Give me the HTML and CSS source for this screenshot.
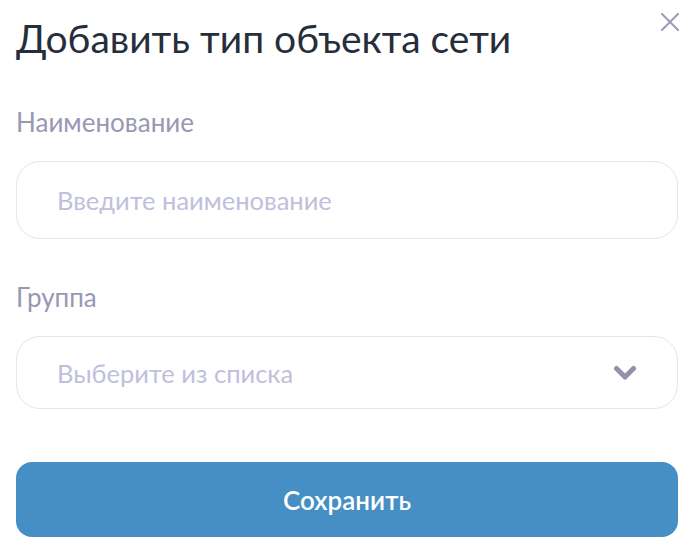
FILE: index.html
```html
<!DOCTYPE html>
<html lang="ru">
<head>
<meta charset="utf-8">
<link rel="stylesheet" href="styles.css">
</head>
<body>
<div class="modal">
  <button class="close" aria-label="Закрыть">
    <svg width="18" height="18" viewBox="0 0 18 18"><path d="M1 1 L17 17 M17 1 L1 17" stroke="#9a9ab8" stroke-width="2" fill="none" stroke-linecap="round"/></svg>
  </button>
  <h1 class="title">Добавить тип объекта сети</h1>
  <label class="label label-first">Наименование</label>
  <input class="field input" type="text" placeholder="Введите наименование">
  <label class="label label-second">Группа</label>
  <div class="field select">
    <span class="placeholder">Выберите из списка</span>
    <svg class="chevron" width="24" height="16" viewBox="0 0 24 16"><polyline points="3.5,3.5 12,12 20.5,3.5" stroke="#9292b0" stroke-width="5" fill="none" stroke-linecap="round" stroke-linejoin="round"/></svg>
  </div>
  <button class="save">Сохранить</button>
</div>
</body>
</html>
```

FILE: styles.css
```css
html, body {
  margin: 0;
  padding: 0;
  background: #ffffff;
}

body {
  font-family: Lato, "Noto Sans", sans-serif;
}

.modal {
  position: relative;
  display: flex;
  flex-direction: column;
  padding: 15px 12px 0 16px;
}

.close {
  position: absolute;
  top: 13px;
  right: 11px;
  width: 18px;
  height: 18px;
  padding: 0;
  border: 0;
  background: none;
  display: flex;
}

.title {
  margin: 0;
  font-size: 39px;
  font-weight: 400;
  line-height: 46px;
  color: #262d3b;
}

.label {
  font-size: 26px;
  line-height: 31px;
  color: #9898b4;
}

.label-first {
  margin-top: 46px;
}

.label-second {
  margin-top: 43px;
}

.field {
  box-sizing: border-box;
  width: 100%;
  border: 1px solid #dde9ef;
  border-radius: 24px;
  background: #fff;
  font-family: Lato, "Noto Sans", sans-serif;
  font-size: 25.5px;
  padding: 0 40px;
}

.input {
  margin-top: 23px;
  height: 78px;
  outline: none;
}

.input::placeholder,
.placeholder {
  color: #c0c0dc;
}

.select {
  margin-top: 23px;
  height: 73px;
  display: flex;
  align-items: center;
  justify-content: space-between;
  padding-right: 40px;
}

.chevron {
  display: block;
}

.save {
  margin-top: 53px;
  height: 75px;
  border: 0;
  border-radius: 16px;
  background: #468fc5;
  color: #ffffff;
  font-family: Lato, "Noto Sans", sans-serif;
  font-size: 26px;
  font-weight: 600;
}
```
